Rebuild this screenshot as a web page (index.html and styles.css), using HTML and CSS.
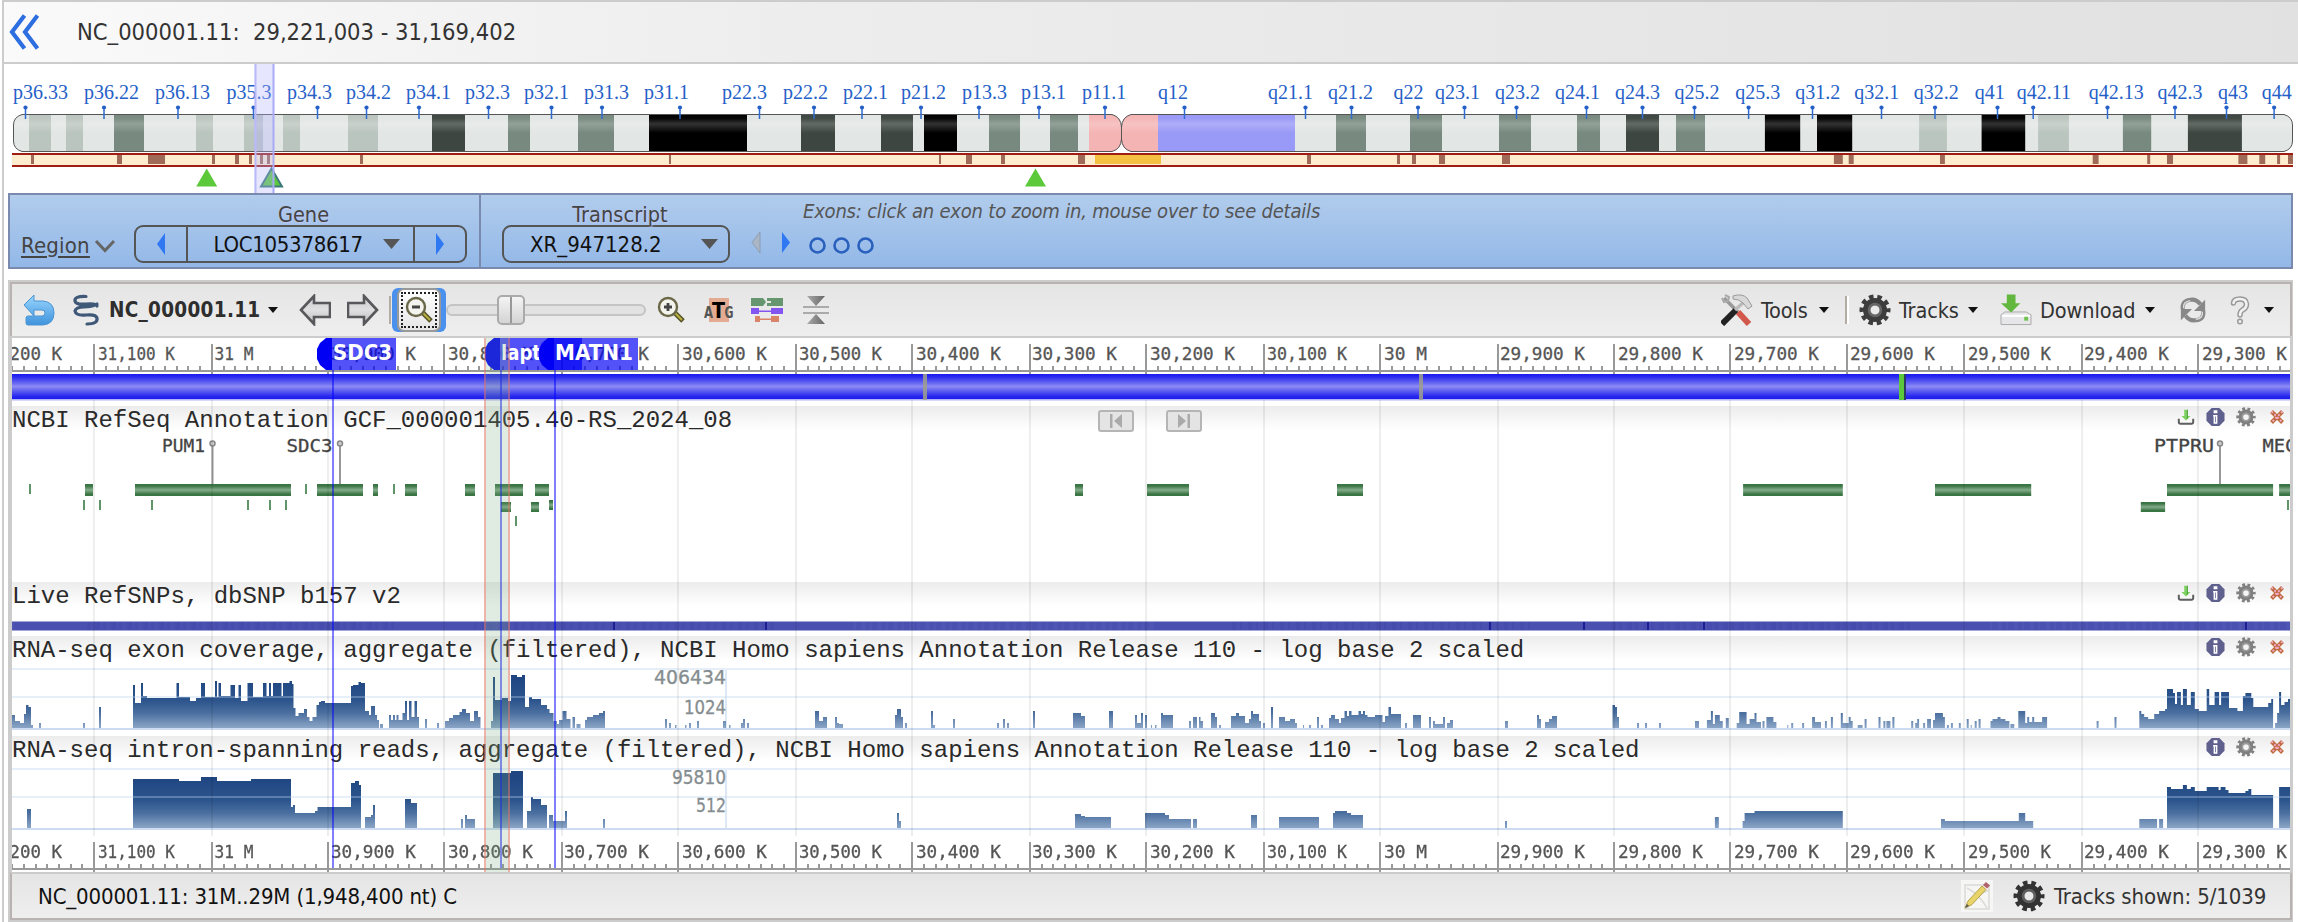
FILE: index.html
```html
<!DOCTYPE html>
<html lang="en">
<head>
<meta charset="utf-8">
<title>NC_000001.11 genome view</title>
<link rel="stylesheet" href="styles.css">
</head>
<body>
<svg class="defs" width="0" height="0">
  <defs>
    <symbol id="gear" viewBox="0 0 32 32">
      <circle cx="16" cy="16" r="13" fill="none" stroke="currentColor" stroke-width="5" stroke-dasharray="4.400 3.770" stroke-dashoffset="2.200"/>
      <circle cx="16" cy="16" r="8.300" fill="none" stroke="currentColor" stroke-width="7.400"/>
      <circle cx="16" cy="16" r="6" fill="none" stroke="#fff" stroke-opacity=".22" stroke-width="2.500"/>
    </symbol>
    <symbol id="info" viewBox="0 0 20 20">
      <path d="M6 .5h8L19.500 6v8L14 19.500H6L.5 14V6z" fill="#60608f"/>
      <path d="M8 3h4v3H8zM7.500 8h4.500v9H8v-7.500h-.5z" fill="#fff"/>
      <path d="M10 9.500v6" stroke="#60608f" stroke-width=".8"/>
    </symbol>
    <symbol id="save" viewBox="0 0 20 18">
      <path d="M2 11v3.500q0 2 2 2h12q2 0 2-2V11" fill="none" stroke="#5f5f5f" stroke-width="2.200"/>
      <path d="M8 1h4v7h3l-5 5-5-5h3z" fill="#7fd063"/>
      <path d="M11.500 1v10" stroke="#4c9a3a" stroke-width="1"/>
    </symbol>
    <symbol id="close" viewBox="0 0 14 14">
      <path d="M1.500 1.500l11 11M12.500 1.500l-11 11" stroke="#bf6a3c" stroke-width="4"/>
      <path d="M1.500 1.500l11 11M12.500 1.500l-11 11" stroke="#f0a8c8" stroke-width="2" stroke-dasharray="2 2"/>
    </symbol>
    <linearGradient id="steel" x1="0" y1="0" x2="0" y2="1"><stop offset="0" stop-color="#c9c9cb"/><stop offset=".5" stop-color="#e0e0e2"/><stop offset="1" stop-color="#bdbdc0"/></linearGradient>
    <linearGradient id="sky" x1="0" y1="0" x2="0" y2="1"><stop offset="0" stop-color="#9ad6ff"/><stop offset="1" stop-color="#3f93dc"/></linearGradient>
    <linearGradient id="cone" x1="0" y1="0" x2="1" y2="0"><stop offset="0" stop-color="#aaa"/><stop offset="1" stop-color="#666"/></linearGradient>
    <linearGradient id="gene" x1="0" y1="0" x2="0" y2="1"><stop offset="0" stop-color="#3a7544"/><stop offset=".15" stop-color="#3a7544"/><stop offset=".5" stop-color="#85ac8b"/><stop offset=".85" stop-color="#3a7544"/><stop offset="1" stop-color="#3a7544"/></linearGradient>
    <linearGradient id="coverage" gradientUnits="userSpaceOnUse" x1="0" y1="10" x2="0" y2="60"><stop offset="0" stop-color="#1f4681"/><stop offset=".45" stop-color="#2d558d"/><stop offset=".7" stop-color="#4a6f9f"/><stop offset="1" stop-color="#8ba5c6"/></linearGradient>
    <linearGradient id="shine" x1="0" y1="0" x2="0" y2="1"><stop offset="0" stop-color="#fff" stop-opacity="0"/><stop offset=".12" stop-color="#fff" stop-opacity=".03"/><stop offset=".26" stop-color="#fff" stop-opacity=".2"/><stop offset=".5" stop-color="#fff" stop-opacity="0"/></linearGradient>
  </defs>
</svg>

<div class="widget">
  <header class="location">
    <svg class="back" width="32" height="36" viewBox="0 0 32 36"><path d="M15.500 1.500L3 18l12.500 16.500M28.500 1.500L16 18l12.500 16.500" fill="none" stroke="#2d6fe0" stroke-width="4.200"/></svg>
    <h1 class="location-text">NC_000001.11:&nbsp; 29,221,003 - 31,169,402</h1>
  </header>

  <svg class="ideogram" id="ideogram" width="2289" height="129" viewBox="4 64 2289 129"></svg>

  <section class="gene-bar">
    <div class="gene-cell">
      <div class="region"><span class="region-link">Region</span>
        <svg width="22" height="14" viewBox="0 0 22 14"><path d="M2 2l9 9.500L20 2" fill="none" stroke="#666" stroke-width="3"/></svg></div>
      <div class="picker">
        <div class="picker-title gene-title">Gene</div>
        <div class="combo gene-combo">
          <div class="combo-step"><svg width="8" height="22" viewBox="0 0 8 22"><path d="M8 0v22L0 11z" fill="#2f78f2"/></svg></div>
          <div class="combo-value">LOC105378617<svg width="17" height="10" viewBox="0 0 17 10"><path d="M0 0h17L8.500 10z" fill="#555"/></svg></div>
          <div class="combo-step"><svg width="8" height="22" viewBox="0 0 8 22"><path d="M0 0v22l8-11z" fill="#2f78f2"/></svg></div>
        </div>
      </div>
    </div>
    <div class="transcript-cell">
      <div class="picker">
        <div class="picker-title transcript-title">Transcript</div>
        <div class="combo transcript-combo">
          <div class="combo-value">XR_947128.2<svg width="17" height="10" viewBox="0 0 17 10"><path d="M0 0h17L8.500 10z" fill="#555"/></svg></div>
        </div>
      </div>
      <div class="exons">
        <div class="exon-hint">Exons: click an exon to zoom in, mouse over to see details</div>
        <svg width="124" height="24" viewBox="750 231 124 24">
          <path d="M760 232v21l-8-10.500z" fill="#a9b6c6" stroke="#8896aa" stroke-width=".8"/>
          <path d="M782 232v21l8-10.500z" fill="#2f78f2"/>
          <g fill="none" stroke="#2960bd" stroke-width="2.600"><circle cx="817.500" cy="245.500" r="7"/><circle cx="841.500" cy="245.500" r="7"/><circle cx="865.500" cy="245.500" r="7"/></g>
        </svg>
      </div>
    </div>
  </section>

  <main class="viewer">
    <div class="toolbar">
      <svg class="tb-undo" width="32" height="32" viewBox="0 0 32 32"><path d="M1 11L11 1v6h9q11 1 11 12t-11 12H5q-2 0-2-2v-5q0-2 2-2h14q3 0 3-3t-3-3h-8v6z" fill="url(#sky)" stroke="#4a94d4"/></svg>
      <svg class="tb-helix" width="28" height="32" viewBox="0 0 28 32"><path d="M14 2.500Q2 2 3 7q1 4 11 3t11 2M3 17q1-4 9-4t13-3M3 17q1 5 11 4t11 3q1 6-10 6" fill="none" stroke="#3f5878" stroke-width="3.200" stroke-linecap="round"/></svg>
      <span class="tb-seq">NC_000001.11</span><i class="caret"></i>
      <svg class="tb-left" width="32" height="32" viewBox="0 0 32 32"><path d="M2 16L15 2v7h16v14H15v7z" fill="url(#steel)" stroke="#58585c" stroke-width="2.600"/></svg>
      <svg class="tb-right" width="32" height="32" viewBox="0 0 32 32"><path d="M30 16L17 2v7H1v14h16v7z" fill="url(#steel)" stroke="#58585c" stroke-width="2.600"/></svg>
      <i class="divider"></i>
      <div class="zoom-out"><div class="zoom-out-face"><div class="zoom-out-dots">
        <svg width="28" height="28" viewBox="0 0 28 28"><path d="M17 16l9 9" stroke="#555228" stroke-width="5"/><path d="M18 17l7 7" stroke="#b8b040" stroke-width="2"/><circle cx="11" cy="11" r="9" fill="#f4f4ee" stroke="#6a6848" stroke-width="2.400"/><path d="M7 11h8" stroke="#444" stroke-width="3"/></svg>
      </div></div></div>
      <div class="slider"><div class="slider-thumb"></div></div>
      <svg class="tb-zoomin" width="28" height="28" viewBox="0 0 28 28"><path d="M17 16l9 9" stroke="#555228" stroke-width="5"/><path d="M18 17l7 7" stroke="#b8b040" stroke-width="2"/><circle cx="11" cy="11" r="9" fill="#f4f4ee" stroke="#6a6848" stroke-width="2.400"/><path d="M7 11h8M11 7v8" stroke="#444" stroke-width="2.800"/></svg>
      <svg class="tb-atg" width="30" height="26" viewBox="0 0 30 26"><path d="M5 1h20v24H5z" fill="#e3ac92"/><text x="0" y="20.500" class="atg-small" textLength="9" lengthAdjust="spacingAndGlyphs">A</text><text x="20.500" y="20.500" class="atg-small" textLength="9" lengthAdjust="spacingAndGlyphs">G</text><text x="8" y="20.500" class="atg-big" textLength="13" lengthAdjust="spacingAndGlyphs">T</text></svg>
      <svg class="tb-tracksets" width="32" height="26" viewBox="0 0 32 26"><path d="M0 1h12l3 4-3 4H0zM16 1h16v8H16v-3h4V4h-4z" fill="#659670"/><path d="M0 11h8v6H0zM20 11h12v6H20zM8 13.500h12v1.500H8z" fill="#8355f0"/><path d="M4 19h5v6H4zM20 19h8v6h-8zM9 21.500h11V23H9z" fill="#d98468"/></svg>
      <svg class="tb-collapse" width="26" height="30" viewBox="0 0 26 30"><path d="M4 1h18l-9 10zM4 29h18l-9-10z" fill="url(#cone)"/><path d="M0 12h26M0 18h26" stroke="#aaa" stroke-width="2.200"/></svg>
      <span class="spring"></span>
      <svg class="tb-tools" width="32" height="32" viewBox="0 0 32 32"><path d="M3 4l14 14" stroke="#999" stroke-width="3.500"/><path d="M1 4l2 4 4-1 1-4-4-2" fill="none" stroke="#aaa" stroke-width="2"/><path d="M17 18l11 12" stroke="#d3584c" stroke-width="6"/><path d="M1 30L15 16" stroke="#222" stroke-width="6"/><path d="M14 16L23 8" stroke="#bbb" stroke-width="3.500"/><path d="M12 2q9-3 14 2l5 8-4 3-5-6q-4-4-10-4z" fill="#d8d8d8" stroke="#999"/></svg>
      <span class="tb-label tools-label">Tools</span><i class="caret"></i>
      <i class="divider light"></i>
      <svg class="tb-gear" width="32" height="32"><use href="#gear"/></svg>
      <span class="tb-label tracks-label">Tracks</span><i class="caret"></i>
      <svg class="tb-download" width="32" height="32" viewBox="0 0 33 32"><path d="M5 18h22l5 3v10H1V21z" fill="#e6e6e8" stroke="#aaa"/><path d="M2 22h29" stroke="#fff" stroke-width="2"/><path d="M25 23h4v4h-4z" fill="#6cc24a"/><path d="M7 0h9v9h5l-9.500 9.500L1 9h6z" fill="#62b83e"/></svg>
      <span class="tb-label download-label">Download</span><i class="caret"></i>
      <svg class="tb-refresh" width="28" height="28" viewBox="0 0 30 28"><path d="M4 13Q3 4 12 3q7-1 11 5" fill="none" stroke="#888" stroke-width="4.500"/><path d="M28 3v12H16z" fill="#888"/><path d="M26 15q1 9-8 10-7 1-11-5" fill="none" stroke="#888" stroke-width="4.500"/><path d="M2 25V13h12z" fill="#888"/><path d="M5 12Q4 5 12 4M25 16q1 7-7 8" fill="none" stroke="#ddd" stroke-width="1.500"/></svg>
      <svg class="tb-help" width="20" height="29" viewBox="0 0 20 29"><g fill="none" stroke-linecap="round"><path d="M3.500 7Q4 3 10 3t6.500 5q0 4-4 6-2.500 1.500-2.500 5" stroke="#999" stroke-width="5.500"/><path d="M3.500 7Q4 3 10 3t6.500 5q0 4-4 6-2.500 1.500-2.500 5" stroke="#f2f2f2" stroke-width="2.600"/></g><circle cx="10" cy="25.500" r="2.300" fill="#eee" stroke="#999" stroke-width="1.500"/></svg>
      <i class="caret"></i>
    </div>

    <div class="tracks">
      <svg class="ruler" id="ruler-top" width="2278" height="36" viewBox="12 0 2278 36"></svg>
      <svg class="sequence" id="sequence" width="2278" height="32" viewBox="12 0 2278 32"></svg>
      <section class="track genes">
        <div class="track-head"><span class="track-name">NCBI RefSeq Annotation GCF_000001405.40-RS_2024_08</span>
          <div class="jump">
            <svg width="36" height="22" viewBox="0 0 36 22"><rect x="1" y="1" width="34" height="20" rx="2" fill="#e4e4e4" stroke="#b5b5b5" stroke-width="2"/><path d="M12 4h2.500v14H12zM24 4v14l-8-7z" fill="#aaa"/></svg>
            <svg width="36" height="22" viewBox="0 0 36 22"><rect x="1" y="1" width="34" height="20" rx="2" fill="#e4e4e4" stroke="#b5b5b5" stroke-width="2"/><path d="M21.500 4H24v14h-2.500zM12 4v14l8-7z" fill="#aaa"/></svg>
          </div>
          <div class="track-tools"><svg width="18" height="18"><use href="#save"/></svg><svg width="19" height="20"><use href="#info"/></svg><svg class="small-gear" width="20" height="20"><use href="#gear"/></svg><svg class="track-close" width="14" height="14"><use href="#close"/></svg></div>
        </div>
        <svg class="track-body" id="genes" width="2278" height="152" viewBox="12 430 2278 152"></svg>
      </section>
      <section class="track snps">
        <div class="track-head"><span class="track-name">Live RefSNPs, dbSNP b157 v2</span>
          <div class="track-tools"><svg width="18" height="18"><use href="#save"/></svg><svg width="19" height="20"><use href="#info"/></svg><svg class="small-gear" width="20" height="20"><use href="#gear"/></svg><svg class="track-close" width="14" height="14"><use href="#close"/></svg></div>
        </div>
        <svg class="track-body" id="snps" width="2278" height="30" viewBox="12 606 2278 30"></svg>
      </section>
      <section class="track reads">
        <div class="track-head"><span class="track-name">RNA-seq exon coverage, aggregate (filtered), NCBI Homo sapiens Annotation Release 110 - log base 2 scaled</span>
          <div class="track-tools"><svg width="19" height="20"><use href="#info"/></svg><svg class="small-gear" width="20" height="20"><use href="#gear"/></svg><svg class="track-close" width="14" height="14"><use href="#close"/></svg></div>
        </div>
        <svg class="track-body" id="exon" width="2278" height="76" viewBox="12 -8 2278 76"></svg>
      </section>
      <section class="track reads">
        <div class="track-head"><span class="track-name">RNA-seq intron-spanning reads, aggregate (filtered), NCBI Homo sapiens Annotation Release 110 - log base 2 scaled</span>
          <div class="track-tools"><svg width="19" height="20"><use href="#info"/></svg><svg class="small-gear" width="20" height="20"><use href="#gear"/></svg><svg class="track-close" width="14" height="14"><use href="#close"/></svg></div>
        </div>
        <svg class="track-body" id="intron" width="2278" height="76" viewBox="12 -8 2278 76"></svg>
      </section>
      <svg class="ruler ruler-soft" id="ruler-bottom" width="2278" height="36" viewBox="12 0 2278 36"></svg>
      <svg class="overlay" id="overlay" width="2278" height="534" viewBox="12 338 2278 534"></svg>
    </div>

    <footer class="status">
      <span class="status-text">NC_000001.11: 31M..29M (1,948,400 nt) C</span>
      <span class="spring"></span>
      <svg class="pencil" width="32" height="32" viewBox="0 0 32 32"><path d="M0 0h32v32H0z" fill="#f6f6f4"/><path d="M4 5h24v24H4zM6 28q10-14 22-18M6 8q12 6 20 20" fill="none" stroke="#dadad6" stroke-width="1.500"/><path d="M4 28l3-7L21 6l4 3.500-14 15z" fill="#e8d468" stroke="#b7a34a"/><path d="M22 5l3-3 4 3.500-3 3z" fill="#b0646c"/><path d="M4 28l2-4 2 2z" fill="#555"/></svg>
      <svg class="status-gear" width="32" height="32"><use href="#gear"/></svg>
      <span class="shown">Tracks shown: 5/1039</span>
    </footer>
  </main>
</div>
<script src="tracks.js"></script>
</body>
</html>
```
FILE: styles.css
```css
* { box-sizing: border-box; }
body { margin: 0; background: #fff; overflow: hidden; font-family: "DejaVu Sans Condensed", "DejaVu Sans", sans-serif; font-stretch: condensed; }
svg { display: block; flex: none; }
.defs { position: absolute; }
.widget { width: 2296px; height: 922px; margin-left: 2px; border-left: 2px solid #ccc; border-top: 2px solid #ccc; display: flex; flex-direction: column; }
.location { height: 62px; flex: none; display: flex; align-items: center; padding-left: 5px; border-bottom: 2px solid #ccc; background: linear-gradient(90deg, #fafafa, #ededed 35%, #e1e1e1); }
.location-text { margin: 0 0 0 36px; font-size: 23.500px; font-weight: normal; color: #333; white-space: pre; }
.ideogram { overflow: hidden; }
.band-label { font: 20px "Liberation Serif", serif; fill: #2560c8; }

.gene-bar { height: 76px; flex: none; margin: 0 5px 0 4px; display: flex; border: 2px solid #7a8aae; background: linear-gradient(#b1ccec, #93b8e8); color: #444; }
.gene-cell { width: 471px; display: flex; border-right: 2px solid #7a8aae; }
.region { display: flex; align-items: center; gap: 4px; width: 123.500px; padding: 29px 0 0 11px; font-size: 22px; }
.region-link { text-decoration: underline; text-underline-offset: 3px; letter-spacing: .2px; }
.picker-title { height: 30px; line-height: 39px; font-size: 21.500px; text-align: center; text-shadow: 1px 1px 2px #c8c8f4; }
.gene-title { padding-left: 24px; width: 316px; }
.transcript-title { padding-left: 8px; letter-spacing: .1px; }
.combo { height: 38px; display: flex; border: 2px solid #555; border-radius: 9px; color: #111; }
.gene-combo { width: 333px; }
.combo-step { width: 50px; flex: none; display: grid; place-items: center; }
.combo-value { flex: 1; display: flex; align-items: center; justify-content: space-between; font-size: 22px; letter-spacing: -.3px; }
.gene-combo .combo-value { border: solid #555; border-width: 0 2px; padding: 0 13px 0 26px; }
.transcript-cell { display: flex; padding-left: 21px; }
.transcript-combo { width: 228px; }
.transcript-combo .combo-value { padding: 0 10px 0 26px; letter-spacing: 0; }
.exons { padding-left: 20px; display: flex; flex-direction: column; }
.exon-hint { height: 36px; padding-left: 53px; line-height: 33px; font-size: 20px; font-style: italic; color: #555; white-space: nowrap; letter-spacing: -.2px; }

.viewer { margin: 11px 5px 0 4px; height: 642px; flex: none; display: flex; flex-direction: column; border: 2px solid #ccc; border-right-width: 1px; }
.toolbar { height: 54px; flex: none; display: flex; align-items: center; border: 2px solid #b8b2b0; border-bottom: 0; padding: 0 16px 0 11px; background: linear-gradient(#e5e5e5, #eee); color: #333; }
.spring { flex: 1; }
.caret { flex: none; border: 5.500px solid transparent; border-top: 6px solid #111; border-bottom: 0; }
.divider { width: 2px; height: 28px; background: #b3aca4; flex: none; }
.tb-helix { margin-left: 17px; }
.tb-seq { width: 151px; margin: 0 8px 0 9px; font-size: 20.500px; font-weight: bold; white-space: nowrap; color: #2e2e2e; letter-spacing: .3px; }
.tb-left { margin-left: 21px; }
.tb-right { margin: 0 10px 0 16px; }
.zoom-out { margin-left: 1px; width: 54px; height: 44px; padding: 0 5px; background: #4a91ee; border-radius: 6px; flex: none; }
.zoom-out-face { height: 44px; padding: 2px; border: 2px solid #999; border-radius: 7px; background: linear-gradient(#fff, #e6e6e6); }
.zoom-out-dots { height: 36px; border: 2px dotted #222; display: grid; place-items: center; }
.slider { width: 200px; height: 12px; margin-right: 11px; border: 2px solid #c4c4c4; border-radius: 6px; background: #e2e2e2; display: flex; align-items: center; padding-left: 49px; flex: none; }
.slider-thumb { width: 28px; height: 30px; flex: none; border: 2px solid #aaa; border-radius: 5px; background: linear-gradient(90deg, transparent 11px, #999 11px 13px, transparent 13px), linear-gradient(#f4f4f4, #d4d4d4); }
.tb-atg { margin-left: 19px; }
.atg-small { font: bold 16px "DejaVu Sans Condensed", sans-serif; fill: #555; }
.atg-big { font: bold 21px "DejaVu Sans Condensed", sans-serif; fill: #000; }
.tb-tracksets { margin-left: 17px; }
.tb-collapse { margin-left: 20px; }
.tb-label { font-size: 21.500px; white-space: nowrap; letter-spacing: -.1px; }
.tools-label { width: 50px; margin: 0 8px; }
.divider.light { margin-left: 16px; box-shadow: 2px 0 #fff; }
.tb-gear { margin-left: 12px; color: #3d3d3d; }
.tracks-label { width: 61px; margin: 0 8px; }
.tb-download { margin-left: 22px; }
.download-label { width: 96px; margin: 0 9px 0 8px; }
.tb-refresh { margin-left: 24px; }
.tb-help { margin: 0 14px 0 23px; }

.tracks { position: relative; height: 536px; flex: none; border-top: 2px solid #ccc; border-left: 2px solid #ccc; border-right: 2px solid #ccc; display: flex; flex-direction: column; overflow: hidden; background: #fff; }
.ruler-text { font: 18px "DejaVu Sans Mono", monospace; fill: #555; stroke: #555; stroke-width: .3px; }
.ruler-soft { filter: blur(.7px); }
.track { flex: none; }
.track-head { height: 24px; display: flex; align-items: flex-start; background: linear-gradient(#ececec, #fff); }
.track-name { font: 24px/29px "Liberation Mono", monospace; color: #2a2a2a; white-space: pre; }
.track-tools { margin-left: auto; display: flex; align-items: center; gap: 11px; padding: 1px 6px 0 0; }
.track-close { margin-left: 3px; }
.small-gear { color: #808080; }
.jump { display: flex; gap: 32px; margin: 4px 0 0 366px; }
.gene-name { font: 17px "DejaVu Sans Mono", monospace; fill: #444; stroke: #444; stroke-width: .3px; }
.scale { font: 19px "DejaVu Sans Condensed", sans-serif; fill: #858d90; stroke: #858d90; stroke-width: .3px; }
.overlay { position: absolute; left: 0; top: 0; }
.tag { font: bold 22px "DejaVu Sans Condensed", sans-serif; fill: #fff; }

.status { height: 48px; flex: none; display: flex; align-items: center; padding: 0 15px 0 26px; border: 2px solid #b8b2b0; border-top: 2px solid #ccc; background: linear-gradient(#e5e5e5, #eee); }
.status-text { font-size: 22px; color: #111; white-space: nowrap; letter-spacing: -.15px; }
.status-gear { margin: 0 9px 0 20px; color: #333; }
.shown { width: 221px; font-size: 22px; color: #333; white-space: nowrap; letter-spacing: -.1px; }
```
FILE: tracks.js
```js
const byId = id => document.getElementById(id);
// The stretch beyond x = 1700 is drawn slightly compressed.
const fx = x => x > 1700 ? Math.round((1700 + (x - 1700) * 0.9916) * 10) / 10 : x;
const rect = (x, y, w, h, fill, extra = '') => `<rect x="${x}" y="${y}" width="${w}" height="${h}" fill="${fill}" ${extra}/>`;
const span = (a, b, y, h, fill, extra) => rect(fx(a), y, (fx(b) - fx(a)).toFixed(1), h, fill, extra);
const text = (x, y, str, cls, w) => `<text x="${x}" y="${y}" class="${cls}" ${w ? `textLength="${w}" lengthAdjust="spacingAndGlyphs"` : ''}>${str}</text>`;

// Chromosome bands
const labels = [['p36.33',13,25.5],['p36.22',84,104],['p36.13',155,178],['p35.3',226.5,253.5],['p34.3',287,317.5],['p34.2',346,366.5],['p34.1',406,419],['p32.3',465,488.5],['p32.1',524,551.5],['p31.3',584,602],['p31.1',644,680],['p22.3',722,759.5],['p22.2',783,814],['p22.1',843,862],['p21.2',901,921],['p13.3',962,979],['p13.1',1021,1039],['p11.1',1082,1105],['q12',1158,1184.5],['q21.1',1268,1305.5],['q21.2',1328,1351.5],['q22',1393.5,1418],['q23.1',1435,1464.5],['q23.2',1495,1516.5],['q24.1',1555,1586.5],['q24.3',1615,1642.5],['q25.2',1674.5,1694.5],['q25.3',1735.5,1749],['q31.2',1796,1813.5],['q32.1',1855.5,1883],['q32.2',1915.5,1937],['q41',1977,2000],['q42.11',2019.5,2036],['q42.13',2092,2111],['q42.3',2161.5,2179],['q43',2222.5,2231],['q44',2266.5,2279]];
const shades = {
  '#bbc5bf': [[29,51],[66,83],[196,213],[244,263],[283,300],[348,378],[1921,1949],[2041,2072]],
  '#788a7f': [[114,144],[508,530],[578,614],[989,1020],[1050,1078],[1336,1366],[1410,1442],[1499,1531],[1577,1600],[1676,1705],[2126.5,2155]],
  '#3d4640': [[432,465],[801,835],[881,913],[1626,1659],[2192,2246.5]],
  '#000000': [[649,747],[924,957],[1765.5,1801],[1818,1853.5],[1984,2028]],
  '#f5b4b4': [[1089,1158]],
  '#9999f7': [[1158,1295]]
};
const marks = [[31,34],[117,122],[148,165],[212,215],[235,239],[249,252],[260,263],[267,270],[360,363],[669,671],[939,941],[966,972],[1001,1005],[1078,1085],[1307,1311],[1397,1400],[1412,1416],[1439,1445],[1502,1510],[1835,1844],[1850,1855],[1942,1947],[2096,2102],[2151,2154],[2171,2177],[2243,2252],[2264,2270],[2282,2285],[2293,2298]];
const outline = 'M22 114.500H1112Q1121 117 1121.500 127V139Q1121 149 1112 151.500H22Q13.500 149 13.500 141V125Q13.500 117 22 114.500ZM1131 114.500H2284Q2292.500 117 2292.500 125V141Q2292.500 149 2284 151.500H1131Q1122 149 1121.500 139V127Q1122 117 1131 114.500Z';
let s = `<clipPath id="arm"><path d="${outline}"/></clipPath><g clip-path="url(#arm)">` + rect(12, 114, 2288, 38, '#e2e6e4');
for (const [color, list] of Object.entries(shades)) for (const [a, b] of list) s += span(a, b, 114, 38, color);
s += rect(12, 114, 2288, 38, 'url(#shine)') + `</g><path d="${outline}" fill="none" stroke="#555" stroke-width="1"/>`;
s += rect(12, 153, 2288, 14, '#fdedce') + rect(1095, 155, 66, 9, '#f5c042');
for (const [a, b] of marks) s += span(a, b, 155, 9, '#a06a58');
s += rect(12, 153, 2288, 2, '#a01d14') + rect(12, 165, 2288, 2, '#a01d14');
for (const [name, x, t] of labels) {
  s += text(fx(x), 99, name, 'band-label') + rect(fx(t) - .75, 107, 1.5, 12, '#2f6bd0') + `<circle cx="${fx(t)}" cy="107.500" r="2.100" fill="#2560c8"/>`;
}
for (const x of [206.7, 271.5, 1035.5]) s += `<path d="M${x} 168.500l10.500 18h-21z" fill="#5cc93b" ${x === 271.5 ? 'stroke="#3c7a78" stroke-width="2"' : ''}/>`;
s += rect(254.5, 64, 19.5, 129, '#b4b4ff', 'fill-opacity=".33"') + rect(254.5, 64, 2, 129, '#b9b9fb') + rect(272.5, 64, 2, 129, '#a9a9f5');
byId('ideogram').innerHTML = s;

// Rulers
const major = [[-23,'31,200 K'],[94,'31,100 K',98,77],[212,'31 M',214.5,39],[328,'30,900 K',331,85],[444,'30,800 K',448,85],[562,'30,700 K',564,85],[678,'30,600 K',682,85],[796,'30,500 K',799,83],[912,'30,400 K',916,85],[1030,'30,300 K',1032,85],[1146,'30,200 K',1150,85],[1264,'30,100 K',1267,80],[1380,'30 M',1384,43],[1498,'29,900 K',1500,85],[1614,'29,800 K',1618,85],[1730,'29,700 K',1734,85],[1847,'29,600 K',1850,85],[1964,'29,500 K',1968,83],[2082,'29,400 K',2084,85],[2198,'29,300 K',2202,85]];
s = '';
major.forEach(([x, name, tx = -22, w = 84], i) => {
  const next = i + 1 < major.length ? major[i + 1][0] : x + 117;
  s += text(tx, 22, name, 'ruler-text', w) + rect(x - 1, 6, 2, 30, '#999');
  for (let k = 1; k < 10; k++) s += rect(Math.round(x + (next - x) * k / 10) - 1, 28, 2, 4, '#999');
});
s += rect(12, 32, 2284, 2, '#999');
byId('ruler-top').innerHTML = s;
byId('ruler-bottom').innerHTML = s;

// Sequence bar
byId('sequence').innerHTML = `<linearGradient id="seq" x1="0" y1="0" x2="0" y2="1"><stop offset="0" stop-color="#1a1aee"/><stop offset=".12" stop-color="#2a2af0"/><stop offset=".5" stop-color="#8b8bf3"/><stop offset=".88" stop-color="#2a2af0"/><stop offset="1" stop-color="#1a1aee"/></linearGradient>`
  + rect(12, 0, 2284, 25, 'url(#seq)') + rect(12, 25, 2284, 1.5, '#b4b4fa')
  + rect(923, 0, 4, 26, '#a0a08c', 'fill-opacity=".85"') + rect(1419, 0, 4, 26, '#a0a08c', 'fill-opacity=".85"')
  + rect(1899, 0, 5, 26, '#5cc83c') + rect(1904, 0, 2, 26, '#2c3a66');

// Gene models
const rows = [
  [484, 12, [[85,93],[135,291],[317,363],[373,378],[405,417],[465,475],[495,523],[535,549],[1075,1083],[1147,1189],[1337,1363],[1743.5,1844],[1937,2034],[2171,2278],[2284,2296]]],
  [484, 10, [[29,31],[305,307],[393,395]]],
  [500, 10, [[83,85],[99,101],[151,153],[247,249],[269,271],[285,287],[549,553],[2292,2294]]],
  [502, 10, [[501,511],[531,539],[2144.5,2169]]],
  [516, 10, [[515,517]]]
];
s = '';
for (const [y, h, list] of rows) for (const [a, b] of list) s += span(a, b, y, h, b - a < 4 ? '#5f9468' : 'url(#gene)');
for (const [name, tx, w, px] of [['PUM1',162,43,212.5],['SDC3',286.5,46,340],['PTPRU',2154,60,2220],['MECR',2262.5,45,0]]) {
  s += text(tx, 452, name, 'gene-name', w);
  if (px) s += rect(px - 1, 446, 2, 38, '#999') + `<circle cx="${px}" cy="443.500" r="2.500" fill="#ccc" stroke="#888" stroke-width="1.500"/>`;
}
byId('genes').innerHTML = s;

// SNP density strip
s = rect(12, 621, 2284, 10, '#a3a8d8') + rect(12, 622, 2284, 8, '#4a50b0');
for (let i = 0; i < 230; i++) s += rect(12 + (i * 379) % 2282, 622, 2 + i % 4, 8, i % 3 ? '#4147aa' : '#535ab6', 'fill-opacity=".5"');
for (const x of [613, 765, 1489, 1583, 1647, 1703, 2245]) s += rect(x, 622, 2, 8, '#1f1f95');
byId('snps').innerHTML = s;

// Coverage plots: start, end, height
const exon = '12 15 13 15 20 7 20 24 5 24 26 14 26 28.5 23 28.5 31 21 31 33 3 39 41 5 83 85 5 99 101 21 133 135 43 135 141 25 141 143 45 143 147 32 147 176.5 30 176.5 179 45 179 190 31 190 196 27 196 201 30 201 205 45 205 215 31 215 217 47 217 218.5 31 218.5 221 45 221 230.5 32 230.5 235 43 235 238.5 30 238.5 241 43 241 247.5 27 247.5 253 45 253 263 31 263 266.5 45 266.5 269 32 269 271 45 271 273 32 273 281.5 45 281.5 283 32 283 289.5 45 289.5 292 47 292 293.5 44 293.5 295.5 20 295.5 298.5 12 298.5 304 15 304 307 19 307 309.5 11 309.5 312.5 7 312.5 316.5 11 316.5 319 23 319 321 26 321 325 27 325 351 25 351 353 42 353 358.5 43 358.5 361 46 361 365 45 365 369 17 369 371 13 371 375 22 375 377 13 377 379 8 380 383 4 389 391 13 391 393 8 393 395 13 395 396.5 8 396.5 398.5 13 398.5 402.5 8 402.5 405 15 405 407 27 407 409 8 409 411.5 27 411.5 414.5 11 414.5 417 27 417 419 11 425 427 9 437 439 5 445 449 7 449 453 10 453 459.5 13 459.5 462 16 462 466 19 466 470 15 470 474 7 474 478 17 478 480.5 11 491 493 7 493 495 51 495 502 28 502 508 30 508 511 27 511 517 53 517 522 51 522 525 53 525 529 21 529 532 31 532 541 29 541 547 23 547 549.5 19 549.5 553.5 15 553.5 557 7 557 559 4 559 562.5 8 562.5 566.5 17 566.5 570.5 9 572.5 575 11 576.5 580.5 4 585 587 8 587 593 11 593 599 13 599 603 15 603 605 17 665 667 9 669 671 5 675 676.5 3 685 686.5 3 689 691 5 697 699 7 723 726 7 729 730.5 3 741 743 5 743 745 9 747 749 5 815 819 17 819 823 7 823 827 11 835 837 11 837 839 5 839 843 4 895 897 13 897 901 19 901 903 11 905 907 5 931 933 17 933 935 3 953 955 9 997 999 5 1003 1005 9 1007 1009 5 1033 1035 17 1073 1081 15 1081 1085 12 1109 1113 17 1135 1137 13 1137 1141 5 1141 1143 15 1145 1147 13 1151 1152 3 1155 1156.5 3 1161 1163 15 1163 1173 13 1189 1191 7 1193 1197 11 1199 1200.5 11 1200.5 1203 7 1211 1215 15 1215 1217 11 1219 1221 3 1231 1236 12 1236 1239 15 1239 1245 12 1245 1249 5 1249 1251 9 1251 1253 17 1253 1259 14 1259 1261 7 1263 1265 5 1271 1273 21 1279 1285 11 1285 1290 7 1290 1295 9 1295 1297 5 1303 1304 3 1309 1311 3 1317 1319 11 1321 1323 3 1329 1331 10 1331 1335 13 1335 1339 9 1339 1341 5 1341 1344.5 10 1344.5 1347 17 1347 1349 12 1349 1351.5 17 1351.5 1358.5 13 1358.5 1361 17 1361 1363 14 1363 1365 17 1365 1367.5 13 1367.5 1375 11 1375 1382.5 13 1382.5 1385 6 1385 1388.5 12 1388.5 1391 21 1391 1401 14 1405 1407 5 1413 1421 13 1429 1431 11 1433 1435 7 1435 1443 4 1443 1445 11 1447 1450 5 1450 1453 8 1505 1508 7 1537 1539 13 1539 1541 9 1545 1549 6 1549 1552 9 1552 1557 12 1612.5 1615 23 1615 1617 21 1617 1619 11 1637 1639 5 1645 1647 5 1659 1661 5 1695 1699 7 1707 1711 8 1711 1713 17 1713 1715 4 1715 1720 13 1720 1723 7 1726 1729 10 1737 1739.5 5 1739.5 1747 16 1747 1750 4 1750 1755 9 1755 1757 15 1757 1761.5 6 1763 1765 7 1767 1774 11 1774 1777 6 1788 1789 3 1792 1794 5 1803 1805 5 1813 1816 11 1816 1822 6 1826 1828 7 1832 1834 11 1842 1844 15 1844 1850 5 1850 1852 11 1852 1854 7 1859 1864 3 1866 1868 9 1880 1882 11 1885 1887 7 1888 1892 7 1894 1896 11 1913 1915 7 1917 1919 5 1919 1921 9 1925 1927 5 1929 1933 9 1935 1937 8 1937 1945 15 1945 1947 11 1949 1951 3 1953 1955 5 1961 1963 5 1969 1971 9 1973 1974 3 1977 1979 7 1981 1983 9 1993 1995 7 1995 2000 9 2000 2003 11 2003 2008 9 2008 2012 7 2013 2017 4 2021 2028 17 2028 2030 5 2030 2032 11 2032 2035 6 2035 2037 11 2037 2045 6 2045 2050 11 2100 2102 7 2118 2120 11 2143 2145 17 2145 2148 14 2148 2152 11 2152 2158 9 2158 2163 14 2163 2169 17 2169 2171 19 2171 2177 39 2177 2179 35 2179 2181 24 2181 2185 36 2185 2187 23 2187 2191 39 2191 2195 23 2195 2199 36 2199 2203 19 2203 2211 17 2211 2213.5 39 2213.5 2219 23 2219 2223.5 36 2223.5 2225.5 23 2225.5 2233.5 36 2233.5 2242 20 2242 2247.5 17 2247.5 2250 32 2250 2256 35 2256 2258 30 2258 2273 21 2273 2276 25 2276 2278 29 2280 2282 5 2282 2284 15 2284 2286 36 2286 2289.5 23 2289.5 2293 26 2293 2296 29';
const intron = '27 31 19 133 179 49 179 201 47 201 217 51 217 251 47 251 291 49 291 293 21 293 295 23 295 315 15 315 317.5 17 317.5 351 21 351 355 45 355 359 47 359 361 43 365 371 11 371 373 13 373 375 23 405 411 29 411 417 25 461 463 9 465 467 13 467 475 9 493 511 55 511 523 57 527 531 17 531 533 31 533 541 29 541 547 23 549 553 13 553 565 7 565 567 17 603 605 9 897 899 15 899 901 7 1075 1081 14 1081 1085 12 1085 1111 11 1145 1165 15 1165 1169 13 1169 1191 9 1193 1197 9 1251 1257 13 1279 1319 11 1333 1335 15 1335 1347 17 1347 1351 15 1351 1363 13 1505 1507 7 1715 1719 11 1743 1745 7 1745 1755 15 1755 1844 17 1943 1947 9 1947 2021.5 7 2021.5 2028 15 2028 2036 7 2143 2161 9 2163 2167 9 2171 2175 41 2175 2187 39 2187 2191 43 2191 2195 39 2195 2199 41 2199 2211 37 2211 2223 41 2223 2225 38 2225 2230 41 2230 2233 38 2233 2250 35 2250 2253 37 2253 2256 39 2256 2278 33 2284 2296 41';
function plot(id, data, top, topX, mid, midX) {
  const v = data.split(' ').map(Number);
  let d = '';
  for (let i = 0; i < v.length; i += 3) d += `M${fx(v[i])} 60V${60 - v[i + 2]}H${fx(v[i + 1])}V60z`;
  byId(id).innerHTML = rect(725, 1, 2, 60, '#dde8f5')
    + text(topX, 16, top, 'scale', 726 - topX) + text(midX, id === 'exon' ? 45.5 : 44, mid, 'scale', 726 - midX)
    + rect(12, 0, 2284, 2, '#e6eff9') + `<path d="${d}" fill="url(#coverage)"/>`
    + rect(12, 28, 2284, 2, '#b9d2ee', 'fill-opacity=".35"') + rect(12, 60, 2284, 2, '#cddcf2');
}
plot('exon', exon, '406434', 654, '1024', 684);
plot('intron', intron, '95810', 672, '512', 696);

// Grid lines, selected range and gene markers
s = '';
for (const [x] of major) if (x > 0) s += rect(x - 1, 400, 2, 436, '#000', 'fill-opacity=".065"');
const pin = (x, w, name, tw) => rect(x, 338, w, 32, '#0000f5', 'fill-opacity=".68"')
  + `<path d="M${x} 338h-6l-6 5-3 6v10l3 6 6 5h6z" fill="#0000f5"/>` + text(x + 1, 359.5, name, 'tag', tw);
s += rect(332, 370, 2, 498, '#0000ff', 'fill-opacity=".5"') + rect(500, 370, 2, 498, '#0000ff', 'fill-opacity=".5"') + rect(554, 370, 2, 498, '#0000ff', 'fill-opacity=".5"');
s += pin(332, 64, 'SDC3', 59) + pin(500, 82, 'lapt', 40);
s += rect(484, 338, 26, 534, '#78a882', 'fill-opacity=".23"') + rect(484, 338, 2, 534, '#ff6a60', 'fill-opacity=".42"') + rect(508, 338, 2, 534, '#ff6a60', 'fill-opacity=".42"');
s += pin(554, 84, 'MATN1', 78);
byId('overlay').innerHTML = s;
```
